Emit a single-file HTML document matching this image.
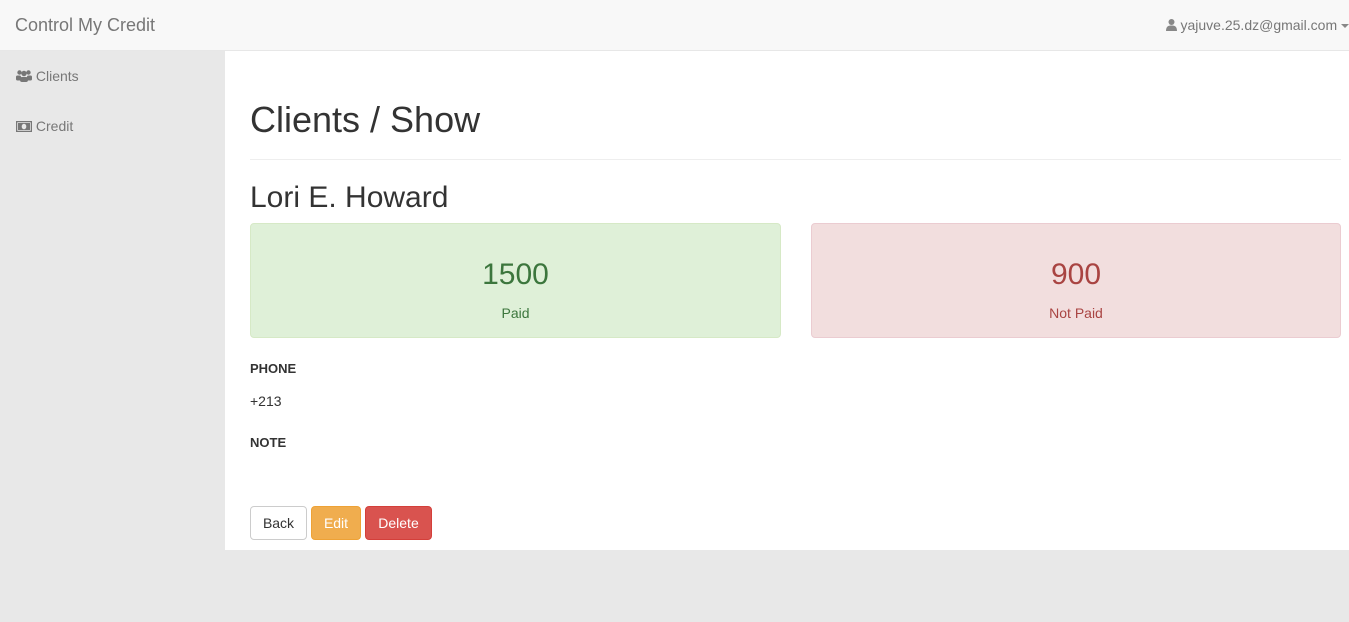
<!DOCTYPE html>
<html><head><meta charset="utf-8"><style>
*{margin:0;padding:0;box-sizing:border-box}
body{width:1349px;height:622px;background:#e8e8e8;font-family:"Liberation Sans",sans-serif;font-size:14px;color:#333;position:relative;overflow:hidden}
.nav{position:absolute;left:0;top:0;width:1349px;height:51px;background:#f8f8f8;border-bottom:1px solid #e7e7e7}
.brand{position:absolute;left:15px;top:15px;font-size:18px;color:#777}
.user{position:absolute;right:0;top:17px;font-size:14px;color:#777;white-space:nowrap}
.side{position:absolute;left:0;top:51px;width:225px;height:571px;background:#e8e8e8}
.side div{position:absolute;left:16px;color:#777;font-size:14px}
.main{position:absolute;left:225px;top:51px;width:1124px;height:499px;background:#fff}
h1{position:absolute;left:25px;top:48px;font-size:36px;font-weight:400;color:#333}
.hr{position:absolute;left:25px;top:108px;width:1091px;border-top:1px solid #eee}
h3{position:absolute;left:25px;top:130px;font-size:30px;font-weight:400;color:#333}
.box{position:absolute;top:172px;width:531px;height:115px;border:1px solid;border-radius:4px;text-align:center}
.box .n{font-size:30px;margin-top:34px}
.box .l{font-size:14px;margin-top:13px}
.g{left:25px;background:#dff0d8;border-color:#d6e9c6;color:#3c763d}
.r{left:586px;width:530px;background:#f2dede;border-color:#ebccd1;color:#a94442}
.lbl{position:absolute;left:25px;font-weight:bold;font-size:13px;color:#333}
.btn{position:absolute;top:455px;height:34px;border:1px solid;border-radius:4px;font-size:14px;line-height:32px;text-align:center}
</style></head><body>
<div class="nav"><div class="brand">Control My Credit</div>
<div class="user"><svg width="11" height="12" viewBox="0 0 11 12" style="vertical-align:-1px"><circle cx="5.5" cy="3" r="3" fill="#888"/><path d="M0 12 Q0 6 5.5 6.5 Q11 6 11 12Z" fill="#888"/></svg> yajuve.25.dz@gmail.com <span style="display:inline-block;border-top:4px solid #888;border-left:4px solid transparent;border-right:4px solid transparent;vertical-align:2px"></span></div></div>
<div class="side">
<div style="top:17px"><svg width="16" height="12" viewBox="0 0 16 12" style="vertical-align:-1px"><circle cx="3.5" cy="2.5" r="2.2" fill="#777"/><circle cx="12.5" cy="2.5" r="2.2" fill="#777"/><circle cx="8" cy="3.5" r="2.7" fill="#777"/><rect x="0" y="5.5" width="5" height="5" rx="1.5" fill="#777"/><rect x="11" y="5.5" width="5" height="5" rx="1.5" fill="#777"/><rect x="4" y="7" width="8" height="5" rx="2" fill="#777"/></svg> Clients</div>
<div style="top:67px"><svg width="16" height="11" viewBox="0 0 16 11" style="vertical-align:-1px"><rect x="0.5" y="0.5" width="15" height="10" fill="none" stroke="#777" stroke-width="1.5"/><rect x="2" y="2" width="12" height="7" fill="#777"/><ellipse cx="8" cy="5.5" rx="2.3" ry="2.8" fill="#e8e8e8"/></svg> Credit</div>
</div>
<div class="main">
<h1>Clients / Show</h1><div class="hr"></div>
<h3>Lori E. Howard</h3>
<div class="box g"><div class="n">1500</div><div class="l">Paid</div></div>
<div class="box r"><div class="n">900</div><div class="l">Not Paid</div></div>
<div class="lbl" style="top:310px">PHONE</div>
<div style="position:absolute;left:25px;top:342px">+213</div>
<div class="lbl" style="top:384px">NOTE</div>
<div class="btn" style="left:25px;width:57px;background:#fff;border-color:#ccc;color:#333">Back</div>
<div class="btn" style="left:86px;width:50px;background:#f0ad4e;border-color:#eea236;color:#fff">Edit</div>
<div class="btn" style="left:140px;width:67px;background:#d9534f;border-color:#d43f3a;color:#fff">Delete</div>
</div>
</body></html>
